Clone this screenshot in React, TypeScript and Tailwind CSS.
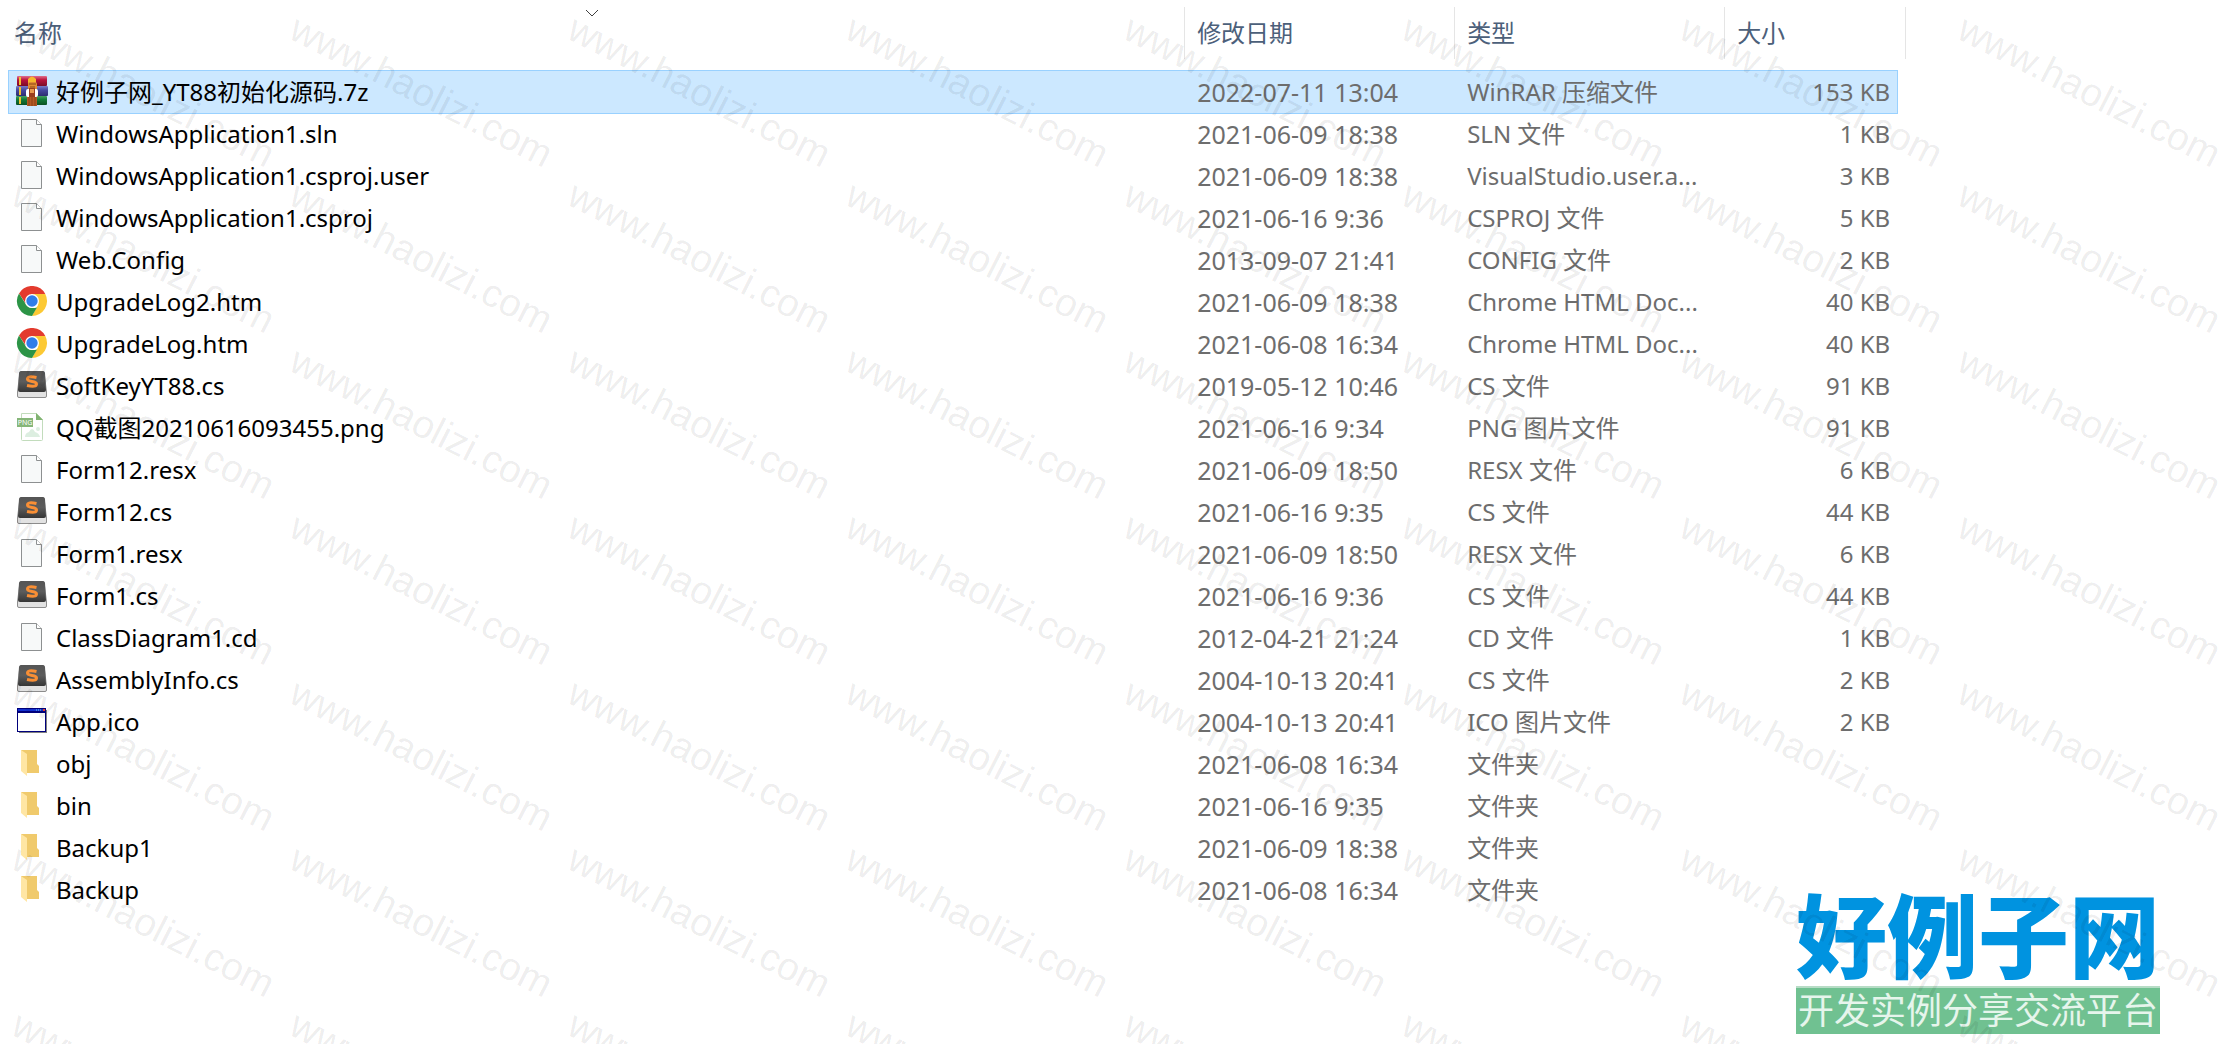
import React, { useState } from "react";
import { clsx } from "clsx";

type IconKind = "rar" | "file" | "chrome" | "sublime" | "png" | "ico" | "folder";

type FileItem = {
  name: string;
  date: string;
  type: string;
  size: string;
  icon: IconKind;
};

const files: FileItem[] = [
  { name: "好例子网_YT88初始化源码.7z", date: "2022-07-11 13:04", type: "WinRAR 压缩文件", size: "153 KB", icon: "rar" },
  { name: "WindowsApplication1.sln", date: "2021-06-09 18:38", type: "SLN 文件", size: "1 KB", icon: "file" },
  { name: "WindowsApplication1.csproj.user", date: "2021-06-09 18:38", type: "VisualStudio.user.a...", size: "3 KB", icon: "file" },
  { name: "WindowsApplication1.csproj", date: "2021-06-16 9:36", type: "CSPROJ 文件", size: "5 KB", icon: "file" },
  { name: "Web.Config", date: "2013-09-07 21:41", type: "CONFIG 文件", size: "2 KB", icon: "file" },
  { name: "UpgradeLog2.htm", date: "2021-06-09 18:38", type: "Chrome HTML Doc...", size: "40 KB", icon: "chrome" },
  { name: "UpgradeLog.htm", date: "2021-06-08 16:34", type: "Chrome HTML Doc...", size: "40 KB", icon: "chrome" },
  { name: "SoftKeyYT88.cs", date: "2019-05-12 10:46", type: "CS 文件", size: "91 KB", icon: "sublime" },
  { name: "QQ截图20210616093455.png", date: "2021-06-16 9:34", type: "PNG 图片文件", size: "91 KB", icon: "png" },
  { name: "Form12.resx", date: "2021-06-09 18:50", type: "RESX 文件", size: "6 KB", icon: "file" },
  { name: "Form12.cs", date: "2021-06-16 9:35", type: "CS 文件", size: "44 KB", icon: "sublime" },
  { name: "Form1.resx", date: "2021-06-09 18:50", type: "RESX 文件", size: "6 KB", icon: "file" },
  { name: "Form1.cs", date: "2021-06-16 9:36", type: "CS 文件", size: "44 KB", icon: "sublime" },
  { name: "ClassDiagram1.cd", date: "2012-04-21 21:24", type: "CD 文件", size: "1 KB", icon: "file" },
  { name: "AssemblyInfo.cs", date: "2004-10-13 20:41", type: "CS 文件", size: "2 KB", icon: "sublime" },
  { name: "App.ico", date: "2004-10-13 20:41", type: "ICO 图片文件", size: "2 KB", icon: "ico" },
  { name: "obj", date: "2021-06-08 16:34", type: "文件夹", size: "", icon: "folder" },
  { name: "bin", date: "2021-06-16 9:35", type: "文件夹", size: "", icon: "folder" },
  { name: "Backup1", date: "2021-06-09 18:38", type: "文件夹", size: "", icon: "folder" },
  { name: "Backup", date: "2021-06-08 16:34", type: "文件夹", size: "", icon: "folder" },
];

const FileIcon = ({ kind }: { kind: IconKind }) => {
  return (
    <svg viewBox="0 0 32 32" className="h-8 w-8 shrink-0" aria-hidden="true">
      {kind === "rar" && (
        <>
          <defs>
            <linearGradient id="rar-red" x1="0" y1="0" x2="0" y2="1">
              <stop offset="0" stopColor="#e0708c" />
              <stop offset="0.4" stopColor="#b8123c" />
              <stop offset="1" stopColor="#7a0c28" />
            </linearGradient>
            <linearGradient id="rar-blue" x1="0" y1="0" x2="0" y2="1">
              <stop offset="0" stopColor="#7a7cc8" />
              <stop offset="0.4" stopColor="#4648a0" />
              <stop offset="1" stopColor="#2c2d70" />
            </linearGradient>
            <linearGradient id="rar-green" x1="0" y1="0" x2="0" y2="1">
              <stop offset="0" stopColor="#46a060" />
              <stop offset="0.4" stopColor="#117a38" />
              <stop offset="1" stopColor="#0a5024" />
            </linearGradient>
          </defs>
          <rect x="1" y="0" width="30" height="10" rx="1" fill="url(#rar-red)" />
          <rect x="0" y="10" width="32" height="10" rx="1" fill="url(#rar-blue)" />
          <rect x="0" y="20" width="31" height="9" rx="1" fill="url(#rar-green)" />
          <path d="M3 1h2v8H3zM3 11h2v8H3zM3 21h2v7H3z" fill="#f0c030" />
          <path d="M12 3q4-5 8 0v5h-8z" fill="#f6b82c" />
          <rect x="12" y="6" width="9" height="9" rx="2" fill="#e08a34" />
          <path d="M13 8h7M14 11h5" stroke="#8a4616" />
          <rect x="10" y="13" width="12" height="8" rx="2" fill="#fff" />
          <rect x="13" y="12" width="6" height="9" fill="#9a3e1e" />
          <path d="M14 13h4v4h-4z" fill="#e89a50" />
          <rect x="11" y="21" width="10" height="9" fill="#b45a24" />
          <path d="M13 21v9M16 21v9M19 21v9" stroke="#8c3f16" />
        </>
      )}
      {kind === "file" && (
        <>
          <path d="M5.500 1.500h15l5 5v22h-20z" fill="#f7f9f9" stroke="#8d9091" />
          <path d="M20.500 1.500v5h5" fill="#fff" stroke="#8d9091" />
        </>
      )}
      {kind === "chrome" && (
        <>
          <path d="M16 8h13.300A15 15 0 0 1 16 30l6-11z" fill="#fcc934" />
          <path d="M3 7.500A15 15 0 0 1 29.300 8H16l-6 10z" fill="#e33b2e" />
          <path d="M3 7.500 10 18.500q3 5 11 3L16 30A15 15 0 0 1 3 7.500" fill="#2c9446" />
          <circle cx="16" cy="15" r="7" fill="#fff" />
          <circle cx="16" cy="15" r="5.700" fill="#2f7de9" />
        </>
      )}
      {kind === "sublime" && (
        <>
          <defs>
            <linearGradient id="sublime-key" x1="0" y1="0" x2="0" y2="1">
              <stop offset="0" stopColor="#555" />
              <stop offset="0.5" stopColor="#5c5c5c" />
              <stop offset="1" stopColor="#363636" />
            </linearGradient>
          </defs>
          <path d="M4 2h24l2.500 20v4q0 1.500-1.500 1.500H3q-1.500 0-1.500-1.500v-4z" fill="#e2e2e2" stroke="#8c8c8c" />
          <path d="M5 1h22q1.500 0 2 2l1 17q0 2-2 2H4q-2 0-2-2L3 3q.5-2 2-2z" fill="url(#sublime-key)" />
          <path d="M20.500 7.500q-9-2-9 1.500c0 3.500 9 1.500 9 5q0 3.500-9.500 1.500" fill="none" stroke="#f98f35" strokeWidth="3" />
        </>
      )}
      {kind === "png" && (
        <>
          <path d="M5.500 1.500h15l6 6v20q0 1-1 1h-19q-1 0-1-1z" fill="#fff" stroke="#c2dcbc" />
          <path d="M20 1l7 7h-7z" fill="#82b472" />
          <path d="M9 25q0-4 4-5 3-6 6 0 4 1 5 5z" fill="#dceee0" />
          <circle cx="22" cy="17" r="2" fill="#dceee0" />
          <rect x="1" y="6" width="16" height="9" fill="#86b679" />
          <text x="9" y="13" textAnchor="middle" fontSize="7" fontFamily="Noto Sans, sans-serif" fill="#fff">PNG</text>
        </>
      )}
      {kind === "ico" && (
        <>
          <path d="M3 4h28v23H3z" fill="#808080" />
          <path d="M1 2h29v24H1z" fill="#00007b" />
          <path d="M2 3h27v2H2z" fill="#1230d0" />
          <path d="M2 7h27v18H2z" fill="#fff" />
          <path d="M20 4h6" stroke="#6fd4f0" strokeDasharray="1 1" />
          <path d="M27 3h2v2h-2z" fill="#e84030" />
        </>
      )}
      {kind === "folder" && (
        <>
          <path d="M5 2h16v14l2 2v7H9z" fill="#f0ca6c" />
          <path d="M5 2l6 4v22l-6-5z" fill="#ffe6a4" />
        </>
      )}
    </svg>
  );
};

const HeaderCell = ({
  label,
  sorted,
  className,
  colSpan,
}: {
  label: string;
  sorted?: boolean;
  className?: string;
  colSpan?: number;
}) => {
  return (
    <th scope="col" colSpan={colSpan} className="p-0 pt-[7px] pb-3 font-normal">
      <div className={clsx("relative h-[52px] border-r border-[#e5e5e5]", className)}>
        <button className="flex h-full w-full items-center text-left text-[#4c607a]">{label}</button>
        {sorted && (
          <svg viewBox="0 0 14 8" className="absolute top-0.5 left-1/2 h-2 w-3.5 -translate-x-1/2" aria-hidden="true">
            <path d="M1 1l6 6 6-6" fill="none" stroke="#404040" />
          </svg>
        )}
      </div>
    </th>
  );
};

const Watermark = () => {
  return (
    <div
      aria-hidden="true"
      className="pointer-events-none absolute inset-0 z-20 grid auto-rows-[166px] grid-cols-[repeat(8,278px)] overflow-hidden pt-2 pl-6"
    >
      {Array.from({ length: 56 }).map((_, idx) => (
        <span
          key={idx}
          className="origin-top-left rotate-[27deg] font-['Liberation_Sans'] text-[39px] leading-none whitespace-nowrap text-black/8"
        >
          www.haolizi.com
        </span>
      ))}
    </div>
  );
};

const SiteLogo = () => {
  return (
    <div className="absolute right-[72px] bottom-[10px] z-10 w-[364px] font-['Noto_Sans_CJK_SC',sans-serif]">
      <div className="pb-2 text-center text-[91px] leading-[94px] font-black whitespace-nowrap text-[#0093e0]">
        好例子网
      </div>
      <div className="border-t-2 border-[#b7dcc6] bg-[#70c191] pb-1.5 text-center text-4xl leading-10 whitespace-nowrap text-[#e6f5ec]">
        开发实例分享交流平台
      </div>
    </div>
  );
};

export default function App() {
  const [selected, setSelected] = useState(0);

  return (
    <main className="relative min-h-screen overflow-hidden bg-white font-['Noto_Sans','Noto_Sans_CJK_SC',sans-serif] text-2xl">
      <div className="w-[85.4%] pl-2">
        <table className="w-full table-fixed border-separate border-spacing-0">
          <colgroup>
            <col />
            <col className="w-[270px]" />
            <col className="w-[270px]" />
            <col className="w-[173px]" />
            <col className="w-2" />
          </colgroup>
          <thead>
            <tr>
              <HeaderCell label="名称" sorted className="-ml-2 pl-3.5" />
              <HeaderCell label="修改日期" className="pl-3" />
              <HeaderCell label="类型" className="pl-3" />
              <HeaderCell label="大小" className="pl-3" colSpan={2} />
            </tr>
          </thead>
          <tbody>
            {files.map((file, idx) => {
              const active = selected === idx;
              const cell = clsx(
                "h-[42px] p-0 leading-[42px] whitespace-nowrap",
                active && "bg-[#cce8ff] shadow-[0_-1px_0_#99d1ff,0_1px_0_#99d1ff]"
              );
              return (
                <tr key={file.name} onClick={() => setSelected(idx)}>
                  <td className={clsx(cell, "text-black", active ? "border-l border-[#99d1ff] pl-[7px]" : "pl-2")}>
                    <div className="flex items-center gap-2">
                      <FileIcon kind={file.icon} />
                      <span>{file.name}</span>
                    </div>
                  </td>
                  <td className={clsx(cell, "pl-3 text-[25px] text-[#6d6d6d]")}>{file.date}</td>
                  <td className={clsx(cell, "pl-3 text-[#6d6d6d]")}>{file.type}</td>
                  <td className={clsx(cell, "text-right text-[#6d6d6d]", active ? "border-r border-[#99d1ff] pr-[7px]" : "pr-2")}>
                    {file.size}
                  </td>
                  <td className="p-0" />
                </tr>
              );
            })}
          </tbody>
        </table>
      </div>
      <SiteLogo />
      <Watermark />
    </main>
  );
}
